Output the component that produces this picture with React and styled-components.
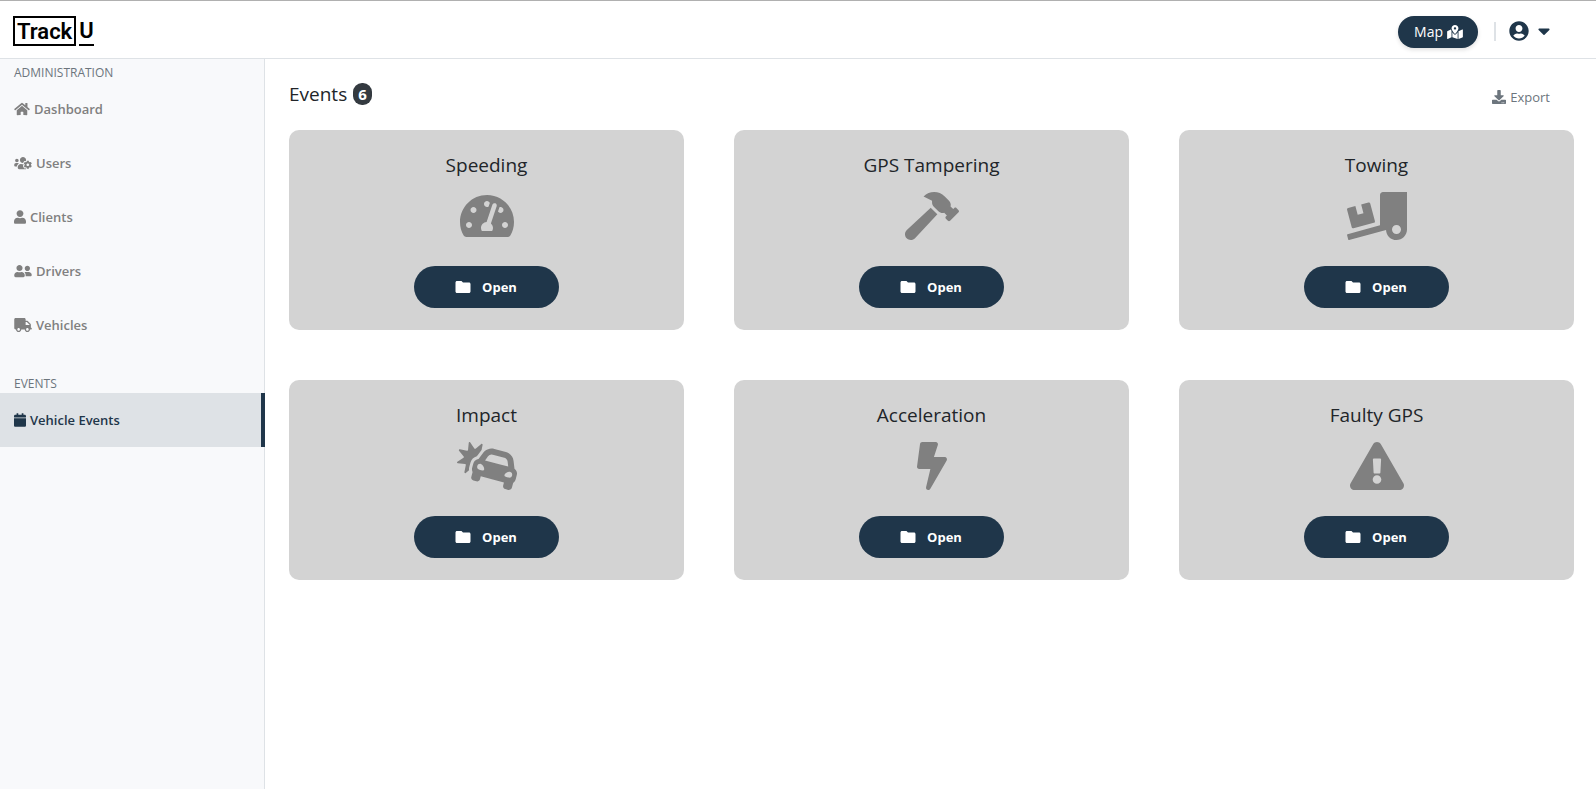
import React from "react";
import styled, { createGlobalStyle } from "styled-components";
import {
  FaHome,
  FaUsersCog,
  FaUser,
  FaUserFriends,
  FaTruck,
  FaCalendar,
  FaMapMarkedAlt,
  FaUserCircle,
  FaCaretDown,
  FaDownload,
  FaTachometerAlt,
  FaHammer,
  FaTruckLoading,
  FaCarCrash,
  FaBolt,
  FaExclamationTriangle,
} from "react-icons/fa";
import { MdFolder } from "react-icons/md";

const GlobalStyle = createGlobalStyle`
  * {
    box-sizing: border-box;
  }
  body {
    margin: 0;
    background-color: white;
    color: #212529;
    font-family: "Open Sans", "Noto Sans", sans-serif;
    font-size: 14px;
  }
  button {
    font-family: inherit;
    cursor: pointer;
  }
  svg {
    flex-shrink: 0;
  }
`;

const Page = styled.div`
  display: flex;
  flex-direction: column;
  min-height: 100vh;
`;
const Header = styled.header`
  display: flex;
  justify-content: space-between;
  align-items: center;
  height: 59px;
  padding: 0 46px 0 13px;
  border-top: 1px solid #b0b0b0;
  border-bottom: 1px solid #dee2e6;
`;
const Logo = styled.a`
  display: flex;
  gap: 3px;
  height: 30px;
  margin-top: 3px;
  color: black;
  font-family: Roboto, "Liberation Sans", sans-serif;
  font-size: 22px;
  font-weight: 600;
  line-height: 27px;
  text-decoration: none;
`;
const LogoBox = styled.span`
  padding: 0 2px;
  border: 2px solid black;
`;
const LogoLetter = styled.span`
  padding-top: 1px;
  border-bottom: 2px solid black;
`;
const HeaderRight = styled.div`
  display: flex;
  align-items: center;
  height: 32px;
  margin-top: 4px;
`;
const MapButton = styled.button`
  display: flex;
  align-items: center;
  gap: 4px;
  height: 32px;
  padding: 0 15px 0 16px;
  border: none;
  border-radius: 16px;
  background-color: #1f364a;
  color: white;
  font-size: 14px;
  box-shadow: 0 2px 4px rgba(0, 0, 0, 0.12);
  svg {
    width: 16px;
    height: 14px;
  }
`;
const Divider = styled.span`
  width: 2px;
  height: 19px;
  margin: 0 13px 0 16px;
  background-color: #dee2e6;
`;
const AccountButton = styled.button`
  display: flex;
  align-items: center;
  gap: 9px;
  height: 30px;
  padding: 0 0 2px;
  border: none;
  background: none;
  color: #1f364a;
  font-size: 20px;
  svg:last-child {
    width: 12px;
  }
`;
const Body = styled.div`
  display: flex;
  flex: 1;
`;
const Sidebar = styled.nav`
  display: flex;
  flex-direction: column;
  width: 265px;
  flex-shrink: 0;
  border-right: 1px solid #dee2e6;
  background-color: #f8f9fb;
`;
const SectionLabel = styled.h2`
  margin: ${(props) => (props.$spaced ? "22px" : "4px")} 0 0;
  padding: 0 14px;
  color: #6c757d;
  font-size: 12px;
  font-weight: 400;
  line-height: 19px;
  text-transform: uppercase;
`;
const NavItem = styled.a`
  display: flex;
  align-items: center;
  gap: 4px;
  height: 54px;
  /* covers the sidebar border when active */
  margin-right: -1px;
  padding: 0 14px;
  border-right: 4px solid ${(props) => (props.$active ? "#1f364a" : "transparent")};
  background-color: ${(props) => (props.$active ? "#dee2e6" : "transparent")};
  color: ${(props) => (props.$active ? "#1f364a" : "gray")};
  font-size: 13px;
  font-weight: 600;
  text-decoration: none;
  svg {
    width: ${(props) => props.$iconWidth}px;
    height: 14px;
  }
`;
const Main = styled.main`
  flex: 1;
  padding: 24px 22px 24px 24px;
`;
const TitleRow = styled.div`
  display: flex;
  justify-content: space-between;
  align-items: flex-start;
  height: 47px;
  padding-right: 24px;
`;
const Title = styled.h1`
  display: flex;
  align-items: center;
  gap: 6px;
  margin: 0;
  font-size: 19px;
  font-weight: 500;
  line-height: 22px;
`;
const Badge = styled.span`
  padding: 0 5px;
  border-radius: 9px;
  background-color: #343a40;
  color: white;
  font-size: 15px;
  font-weight: 700;
  line-height: 22px;
`;
const ExportButton = styled.button`
  display: flex;
  align-items: center;
  gap: 4px;
  height: 28px;
  padding: 0;
  border: none;
  background: none;
  color: #6c757d;
  font-size: 13px;
  svg {
    font-size: 14px;
  }
`;
const CardGrid = styled.div`
  display: grid;
  grid-template-columns: repeat(3, 1fr);
  gap: 50px;
`;
const Card = styled.section`
  display: flex;
  flex-direction: column;
  align-items: center;
  padding: 24px 0 22px;
  border-radius: 10px;
  background-color: lightgray;
  > svg {
    width: 60px;
    height: 48px;
    margin: 16px 0 26px;
    color: gray;
  }
`;
const CardTitle = styled.h2`
  margin: 0;
  font-size: 19px;
  font-weight: 500;
  line-height: 22px;
`;
const OpenButton = styled.button`
  display: flex;
  justify-content: center;
  align-items: center;
  gap: 10px;
  width: 145px;
  height: 42px;
  padding: 0 8px 0 6px;
  border: none;
  border-radius: 21px;
  background-color: #1f364a;
  color: white;
  font-size: 13px;
  font-weight: 700;
  svg {
    font-size: 18px;
  }
`;

const adminLinks = [
  { name: "Dashboard", Icon: FaHome, iconWidth: 16 },
  { name: "Users", Icon: FaUsersCog, iconWidth: 18 },
  { name: "Clients", Icon: FaUser, iconWidth: 12 },
  { name: "Drivers", Icon: FaUserFriends, iconWidth: 18 },
  { name: "Vehicles", Icon: FaTruck, iconWidth: 18 },
];

const events = [
  { name: "Speeding", Icon: FaTachometerAlt },
  { name: "GPS Tampering", Icon: FaHammer },
  { name: "Towing", Icon: FaTruckLoading },
  { name: "Impact", Icon: FaCarCrash },
  { name: "Acceleration", Icon: FaBolt },
  { name: "Faulty GPS", Icon: FaExclamationTriangle },
];

const EventCard = ({ name, Icon }) => (
  <Card>
    <CardTitle>{name}</CardTitle>
    <Icon />
    <OpenButton>
      <MdFolder />
      Open
    </OpenButton>
  </Card>
);

const App = () => {
  return (
    <Page>
      <GlobalStyle />
      <Header>
        <Logo href="#">
          <LogoBox>Track</LogoBox>
          <LogoLetter>U</LogoLetter>
        </Logo>
        <HeaderRight>
          <MapButton>
            Map <FaMapMarkedAlt />
          </MapButton>
          <Divider />
          <AccountButton aria-label="Account">
            <FaUserCircle />
            <FaCaretDown />
          </AccountButton>
        </HeaderRight>
      </Header>
      <Body>
        <Sidebar>
          <SectionLabel>Administration</SectionLabel>
          {adminLinks.map(({ name, Icon, iconWidth }) => (
            <NavItem key={name} href="#" $iconWidth={iconWidth}>
              <Icon />
              {name}
            </NavItem>
          ))}
          <SectionLabel $spaced>Events</SectionLabel>
          <NavItem href="#" $iconWidth={12} $active>
            <FaCalendar />
            Vehicle Events
          </NavItem>
        </Sidebar>
        <Main>
          <TitleRow>
            <Title>
              Events <Badge>{events.length}</Badge>
            </Title>
            <ExportButton>
              <FaDownload />
              Export
            </ExportButton>
          </TitleRow>
          <CardGrid>
            {events.map((event) => (
              <EventCard key={event.name} {...event} />
            ))}
          </CardGrid>
        </Main>
      </Body>
    </Page>
  );
};

export default App;
